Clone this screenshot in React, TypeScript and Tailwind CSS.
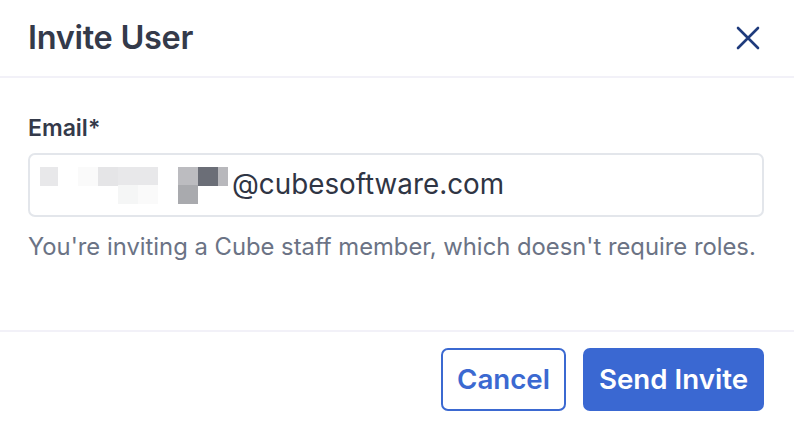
import React from "react";

const blocks = [
  { x: 0, y: 0, w: 18, c: "#e8e8ea" },
  { x: 38, y: 0, w: 20, c: "#fafafa" },
  { x: 58, y: 0, w: 20, c: "#e5e5e7" },
  { x: 78, y: 0, w: 20, c: "#e8e8ea" },
  { x: 98, y: 0, w: 20, c: "#e8e8ea" },
  { x: 138, y: 0, w: 20, c: "#bcbcc0" },
  { x: 158, y: 0, w: 20, c: "#6b6e77" },
  { x: 178, y: 0, w: 10, c: "#b8b8bc" },
  { x: 78, y: 18, w: 20, c: "#f5f6f6" },
  { x: 98, y: 18, w: 20, c: "#fafafa" },
  { x: 138, y: 18, w: 20, c: "#a9aaae" },
];

const App = () => {
  return (
    <div className="w-[794px] h-[426px] bg-white font-['Inter',sans-serif] flex flex-col">
      {/* header */}
      <div className="h-[78px] flex items-center justify-between pl-[28px] pr-[34px] border-b-2 border-[#f2f1f8]">
        <h1 className="text-[32.5px] font-semibold text-[#343a4a] tracking-[-0.3px] leading-none">Invite User</h1>
        <button className="text-[#1f3b7c]">
          <svg width="24" height="24" viewBox="0 0 24 24" fill="none" stroke="currentColor" strokeWidth="2.6" strokeLinecap="round">
            <path d="M2 2 L22 22 M22 2 L2 22" />
          </svg>
        </button>
      </div>

      {/* body */}
      <div className="flex-1 px-[28px] pt-[36px]">
        <label className="block text-[23px] font-semibold text-[#343a4a] leading-[28px]">Email*</label>
        <div className="mt-[11px] h-[64px] w-[736px] border-2 border-[#e3e6eb] rounded-[7px] flex items-center pl-[10px]">
          <span className="relative inline-block w-[190px] h-[37px] mr-[2px]">
            {blocks.map((b, i) => (
              <span
                key={i}
                className="absolute h-[19px]"
                style={{ left: b.x, top: b.y, width: b.w, backgroundColor: b.c }}
              />
            ))}
          </span>
          <span className="text-[27.8px] text-[#2f3544] leading-none">@cubesoftware.com</span>
        </div>
        <p className="mt-[15px] text-[23.8px] text-[#6b7385] leading-[30px]">
          You're inviting a Cube staff member, which doesn't require roles.
        </p>
      </div>

      {/* footer */}
      <div className="h-[96px] border-t-2 border-[#f2f1f8] flex items-start justify-end gap-[17px] pr-[30px] pt-[16px]">
        <button className="h-[63px] w-[125px] border-2 border-[#3b69d1] rounded-[7px] text-[27.7px] font-semibold text-[#3b69d1]">
          Cancel
        </button>
        <button className="h-[63px] w-[181px] bg-[#3a68d2] rounded-[7px] text-[27.7px] font-semibold text-white">
          Send Invite
        </button>
      </div>
    </div>
  );
};

export default App;
